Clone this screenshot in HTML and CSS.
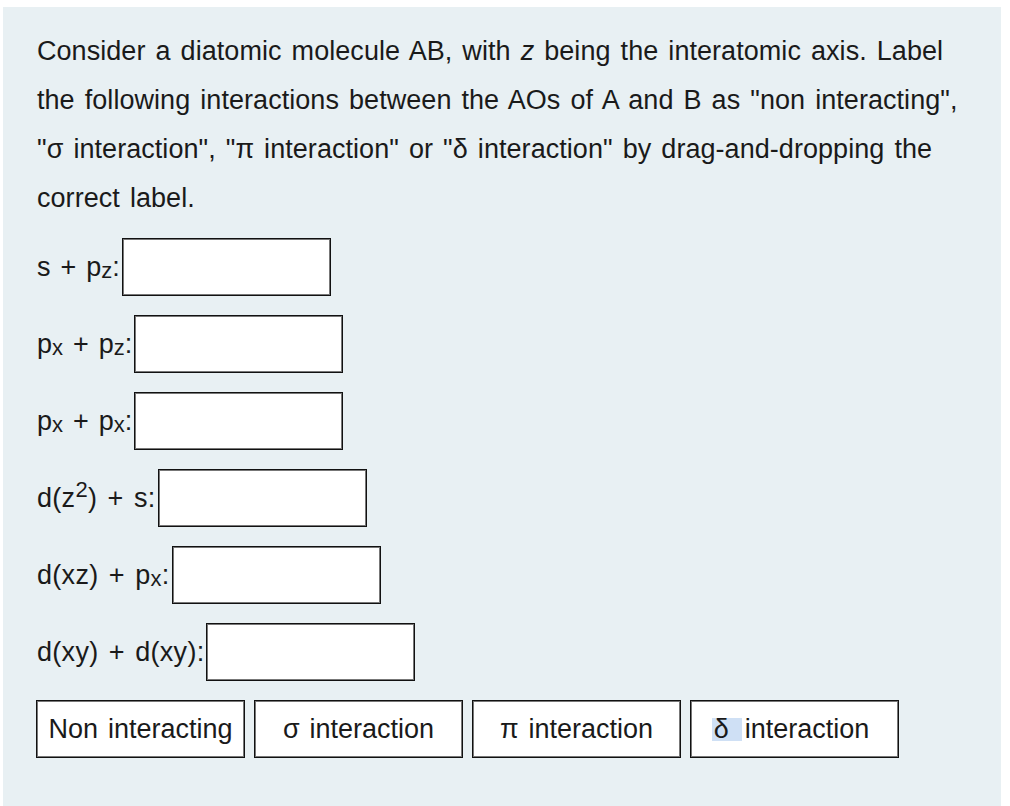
FILE: index.html
```html
<!DOCTYPE html>
<html lang="en">
<head>
<meta charset="utf-8">
<title>Diatomic molecule AO interactions</title>
<link rel="stylesheet" href="styles.css">
</head>
<body>
<div class="panel">
  <p class="question">Consider a diatomic molecule AB, with <i>z</i> being the interatomic axis. Label the following interactions between the AOs of A and B as "non interacting", "σ interaction", "π interaction" or "δ interaction" by drag-and-dropping the correct label.</p>
  <div class="rows">
    <div class="row"><span class="label">s + p<sub>z</sub>:</span><span class="drop"></span></div>
    <div class="row"><span class="label">p<sub>x</sub> + p<sub>z</sub>:</span><span class="drop"></span></div>
    <div class="row"><span class="label">p<sub>x</sub> + p<sub>x</sub>:</span><span class="drop"></span></div>
    <div class="row"><span class="label wide">d(z<sup>2</sup>) + s:</span><span class="drop"></span></div>
    <div class="row"><span class="label wide">d(xz) + p<sub>x</sub>:</span><span class="drop"></span></div>
    <div class="row"><span class="label wide">d(xy) + d(xy):</span><span class="drop"></span></div>
  </div>
  <div class="choices">
    <div class="choice"><span>Non interacting</span></div>
    <div class="choice"><span>σ interaction</span></div>
    <div class="choice"><span>π interaction</span></div>
    <div class="choice"><span class="selected"><span class="hl">δ</span>interaction</span></div>
  </div>
</div>
</body>
</html>
```
FILE: styles.css
```css
html, body {
  margin: 0;
  padding: 0;
  background: #ffffff;
}
body {
  font-family: "Liberation Sans", Arial, Helvetica, sans-serif;
  color: #1a1a1a;
  font-size: 27px;
  word-spacing: 2.5px;
}
.panel {
  margin: 7px 9px 0 3px;
  height: 799px;
  box-sizing: border-box;
  background: #e8f0f3;
  padding: 20px 20px 0 34px;
}
.question {
  margin: 0;
  max-width: 925px;
  line-height: 49px;
  letter-spacing: 0.05px;
}
.rows {
  margin-top: 15px;
  display: flex;
  flex-direction: column;
  gap: 19px;
}
.row {
  display: flex;
  align-items: center;
  gap: 2px;
}
.label {
  line-height: 30px;
}
.label.wide {
  letter-spacing: 0.3px;
}
.label sub, .label sup {
  font-size: 22px;
  line-height: 0;
}
.label sub { vertical-align: -2px; }
.label sup { vertical-align: 10px; }
.drop {
  display: block;
  width: 207px;
  height: 56px;
  background: #fff;
  border: 1px solid #111;
  box-shadow: inset 1px 1px 0 #777, inset -1px -1px 0 #777;
}
.choices {
  margin-top: 19px;
  margin-left: -1px;
  display: flex;
  gap: 9px;
}
.choice {
  width: 207px;
  height: 56px;
  background: #fff;
  border: 1px solid #111;
  box-shadow: inset 1px 1px 0 #777, inset -1px -1px 0 #777;
  display: flex;
  align-items: center;
  justify-content: center;
  white-space: nowrap;
}
.selected {
  margin-right: 8px;
}
.hl {
  display: inline-block;
  line-height: 23px;
  padding: 0 13px 0 2px;
  margin-right: 3px;
  background: #cfe0f5;
}
```
